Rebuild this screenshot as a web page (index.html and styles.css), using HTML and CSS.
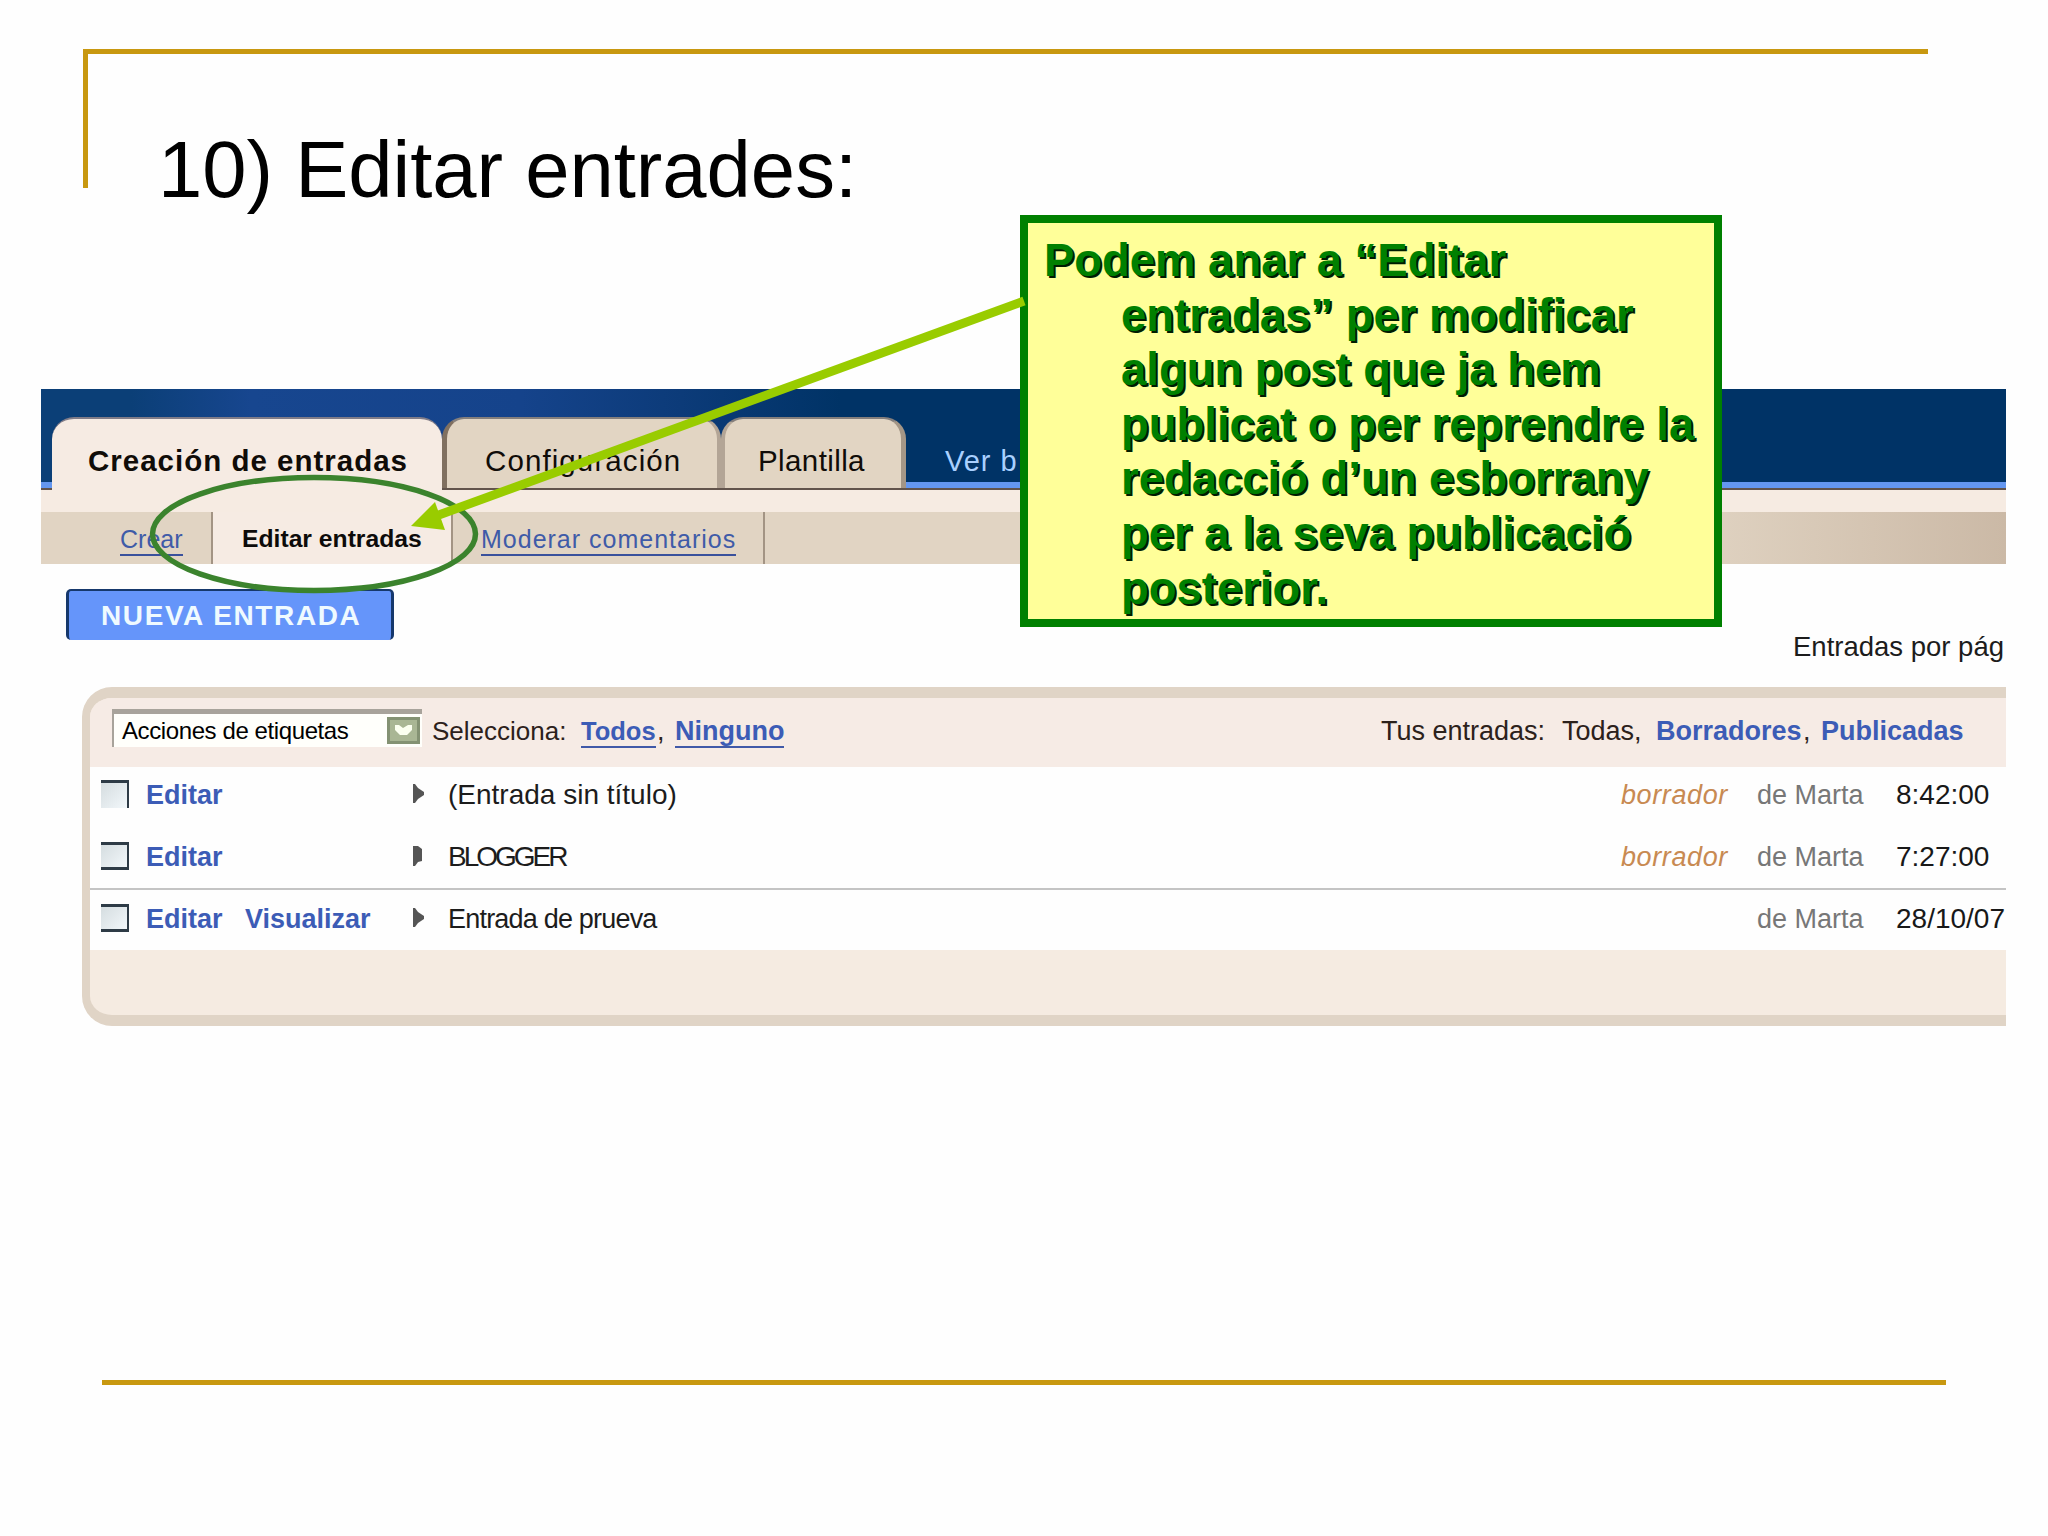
FILE: index.html
```
<!DOCTYPE html>
<html lang="ca">
<head>
<meta charset="utf-8">
<title>10) Editar entrades</title>
<link rel="stylesheet" href="styles.css">
</head>
<body>
<main class="slide">
  <header class="slide-head"><h1>10) Editar entrades:</h1></header>

  <section class="app">
    <nav class="tabs">
      <span class="tab tab-active">Creación de entradas</span>
      <span class="tab tab-config">Configuración</span>
      <span class="tab tab-template">Plantilla</span>
      <span class="view-blog">Ver b</span>
    </nav>
    <div class="strip"></div>
    <nav class="subtabs">
      <a class="sub sub-create"><u>Crear</u></a>
      <span class="sub sub-edit">Editar entradas</span>
      <a class="sub sub-moderate"><u>Moderar comentarios</u></a>
    </nav>
    <div class="toolbar">
      <span class="new-post">NUEVA ENTRADA</span>
      <span class="per-page">Entradas por pág</span>
    </div>
    <div class="panel">
      <div class="filters">
        <span class="select">
          <span class="select-text">Acciones de etiquetas</span>
          <svg class="drop" viewBox="0 0 33 27"><rect width="33" height="27" fill="#849273"/><rect x="3" y="3" width="27" height="21" fill="#a9b694"/><path d="M8 8h4l4 3 5-3h4v5l-5 5h-7l-5-5z" fill="#fbfff0"/></svg>
        </span>
        <span class="pick">Selecciona:</span>
        <a class="link all"><u>Todos</u></a><span class="comma">,</span>
        <a class="link none"><u>Ninguno</u></a>
        <span class="yours">Tus entradas:</span>
        <span class="shown">Todas,</span>
        <a class="link drafts">Borradores</a><span class="comma">,</span>
        <a class="link published">Publicadas</a>
      </div>
      <div class="row row-1">
        <span class="check check-open"></span><a class="link">Editar</a><span></span>
        <svg class="marker" viewBox="0 0 12 20"><path d="M0 0h2l3 4 6 4v3l-6 4-3 4H0z" fill="#555"/></svg>
        <span class="name">(Entrada sin título)</span><em>borrador</em><span class="author">de Marta</span><span class="time">8:42:00</span>
      </div>
      <div class="row row-2">
        <span class="check"></span><a class="link">Editar</a><span></span>
        <svg class="marker" viewBox="0 0 12 20"><path d="M0 0h5l4 3v12l-4 1-3 4H0z" fill="#555"/></svg>
        <span class="name name-blogger">BLOGGER</span><em>borrador</em><span class="author">de Marta</span><span class="time">7:27:00</span>
      </div>
      <div class="row row-3">
        <span class="check"></span><a class="link">Editar</a><a class="link">Visualizar</a>
        <svg class="marker" viewBox="0 0 12 20"><path d="M0 0h2l3 4 6 4v3l-6 4-3 4H0z" fill="#555"/></svg>
        <span class="name name-test">Entrada de prueva</span><span></span><span class="author">de Marta</span><span class="time">28/10/07</span>
      </div>
      <div class="panel-foot"></div>
    </div>
  </section>

  <footer class="slide-foot"></footer>

  <aside class="callout">
    <p>Podem anar a “Editar<br>entradas” per modificar<br>algun post que ja hem<br>publicat o per reprendre la<br>redacció d’un esborrany<br>per a la seva publicació<br>posterior.</p>
  </aside>
  <svg class="pointer" viewBox="0 0 2048 1536">
    <ellipse cx="314" cy="534" rx="161.5" ry="56.5" fill="none" stroke="#3b832d" stroke-width="5.5"/>
    <path d="M1024 301L436 516" stroke="#9c0" stroke-width="9"/>
    <path d="M411 526l24-24 10 28z" fill="#9c0"/>
  </svg>
</main>
</body>
</html>
```
FILE: styles.css
```
* { box-sizing: border-box; }
body { margin: 0; background: #fefefe; }
u { text-decoration: none; }

.slide {
  position: relative;
  width: 2048px;
  height: 1536px;
  overflow: hidden;
  padding-top: 49px;
  font: 27px/32px "Liberation Sans", Arial, sans-serif;
  color: #1c1c1c;
  white-space: nowrap;
}
.slide-head {
  width: 1845px;
  height: 139px;
  margin-left: 83px;
  border-top: 5px solid #c89810;
  border-left: 5px solid #c89810;
}
h1 {
  margin: 0;
  padding: 70px 0 0 70px;
  font-size: 79.6px;
  font-weight: 400;
  line-height: 92px;
  color: #000;
}

.app {
  width: 1965px;
  height: 637px;
  margin: 201px 0 0 41px;
  overflow: hidden;
}
.tabs {
  display: flex;
  align-items: flex-end;
  height: 101px;
  padding-left: 11px;
  background:
    linear-gradient(#62544c, #62544c) 0 99px / 100% 2px no-repeat,
    linear-gradient(#6497f0, #6497f0) 0 93px / 100% 6px no-repeat,
    linear-gradient(90deg, #0b3f77 0, #0b3f77 90px, #17468f 210px, #15438b 480px, #0c3b79 640px, #036 800px);
}
.tab {
  height: 73px;
  padding-top: 26px;
  font-size: 29.5px;
  color: #100c08;
  background: #e2d5c3;
  border-top: 2px solid #857f7c;
  border-radius: 22px 22px 0 0;
}
.tab-active {
  width: 390px;
  padding-left: 36px;
  font-weight: 700;
  letter-spacing: 1px;
  background: #f6ebe3;
  border-top-color: #807c88;
}
.tab-config, .tab-template { height: 71px; margin-bottom: 2px; }
.tab-config {
  width: 279px;
  padding-left: 38px;
  letter-spacing: 1.1px;
  border-left: 5px solid #807060;
  border-right: 4px solid #b3a596;
}
.tab-template {
  width: 185px;
  padding-left: 33px;
  letter-spacing: .4px;
  border-left: 4px solid #b3a596;
  border-right: 5px solid #a49686;
}
.view-blog {
  height: 71px;
  margin: 0 0 2px 39px;
  padding-top: 28px;
  font-size: 29px;
  letter-spacing: 1px;
  color: #a9d0ff;
}
.strip { height: 22px; background: #f6ebe2; }
.subtabs {
  display: flex;
  height: 52px;
  background: linear-gradient(90deg, #e1d4c3 0, #e1d4c3 1640px, #cbb9a6 1965px);
}
.sub { height: 52px; padding-top: 11px; font-size: 25px; border-right: 2px solid #a39484; }
.sub u { display: inline-block; height: 33px; border-bottom: 2px solid #3a519c; color: #3f5ba8; }
.sub-create { width: 172px; padding-left: 79px; }
.sub-edit {
  width: 240px;
  padding-left: 29px;
  font-size: 24.7px;
  font-weight: 700;
  color: #0d0b0a;
  background: #f6ebe3;
}
.sub-moderate { width: 312px; padding-left: 28px; letter-spacing: 1px; }

.toolbar { display: flex; justify-content: space-between; height: 123px; padding: 25px 0 0 25px; }
.new-post {
  width: 328px;
  height: 51px;
  padding: 9px 0 0 32px;
  font-size: 28px;
  font-weight: 700;
  letter-spacing: 1.6px;
  color: #effaff;
  background: #6595fa;
  border: solid #16386c;
  border-width: 2px 3px 0;
  border-radius: 5px;
}
.per-page { width: 213px; padding-top: 42px; font-size: 27.5px; }

.panel {
  height: 339px;
  margin-left: 41px;
  overflow: hidden;
  background: #f5ebe1;
  border: solid #e0d4c6;
  border-width: 11px 0 11px 8px;
  border-radius: 30px 0 0 30px;
}
.filters { display: flex; height: 69px; padding: 11px 0 0 22px; background: #f6ebe5; color: #2c211b; }
.filters > span, .filters > a { padding-top: 6px; flex: none; }
.filters .select {
  display: flex;
  width: 310px;
  height: 38px;
  padding: 3px 2px 0 8px;
  background: #fffffb;
  border-top: 5px solid #a8a39b;
  border-left: 2px solid #a8a39b;
}
.select-text { flex: 1; margin-top: -2px; font-size: 24px; letter-spacing: -.4px; color: #000; }
.drop { width: 33px; height: 27px; }
.filters .pick { width: 159px; padding-left: 10px; font-size: 26px; }
.link { color: #3c5cb6; font-weight: 700; }
.link u { display: inline-block; height: 33px; border-bottom: 2px solid #4059a8; }
.all { width: 76px; font-size: 25.5px; }
.comma { width: 18px; }
.none { width: 706px; }
.yours { width: 181px; }
.shown { width: 94px; }
.drafts { width: 147px; }

.row {
  display: grid;
  grid-template-columns: 45px 99px 168px 35px 1173px 136px 139px 115px;
  padding-left: 11px;
  background: #fefefe;
}
.row > * { margin-top: 12px; }
.row-1 { height: 59px; }
.row-2 { height: 64px; padding-top: 3px; border-bottom: 2px solid #c4c4c4; }
.row-3 { height: 60px; padding-top: 1px; }
.row .check {
  width: 28px;
  height: 28px;
  margin-top: 13px;
  background: linear-gradient(135deg, #d5dde0, #f2f7fa);
  border: solid #2e3b46;
  border-width: 3px 2px 3px 0;
}
.row .check-open { border-bottom: 0; }
.row .marker { width: 12px; height: 20px; margin-top: 17px; }
.name { font-size: 28px; }
.name-blogger { letter-spacing: -3px; }
.name-test { font-size: 27px; letter-spacing: -.8px; }
em { color: #c88a52; letter-spacing: .6px; }
.author { color: #777; }
.time { font-size: 28px; color: #181818; }

.slide-foot { width: 1844px; margin: 354px 0 0 102px; border-top: 5px solid #c89810; }

.callout {
  position: absolute;
  left: 1020px;
  top: 215px;
  width: 702px;
  height: 412px;
  padding: 11px 0 0 93px;
  background: #ffff99;
  border: 8px solid #008000;
}
.callout p {
  margin: 0;
  font-size: 45.45px;
  font-weight: 700;
  line-height: 54.6px;
  text-indent: -77px;
  color: #008000;
  text-shadow: 2px 2px 0 #001c00;
}
.pointer { position: absolute; left: 0; top: 0; width: 2048px; height: 1536px; }
```
